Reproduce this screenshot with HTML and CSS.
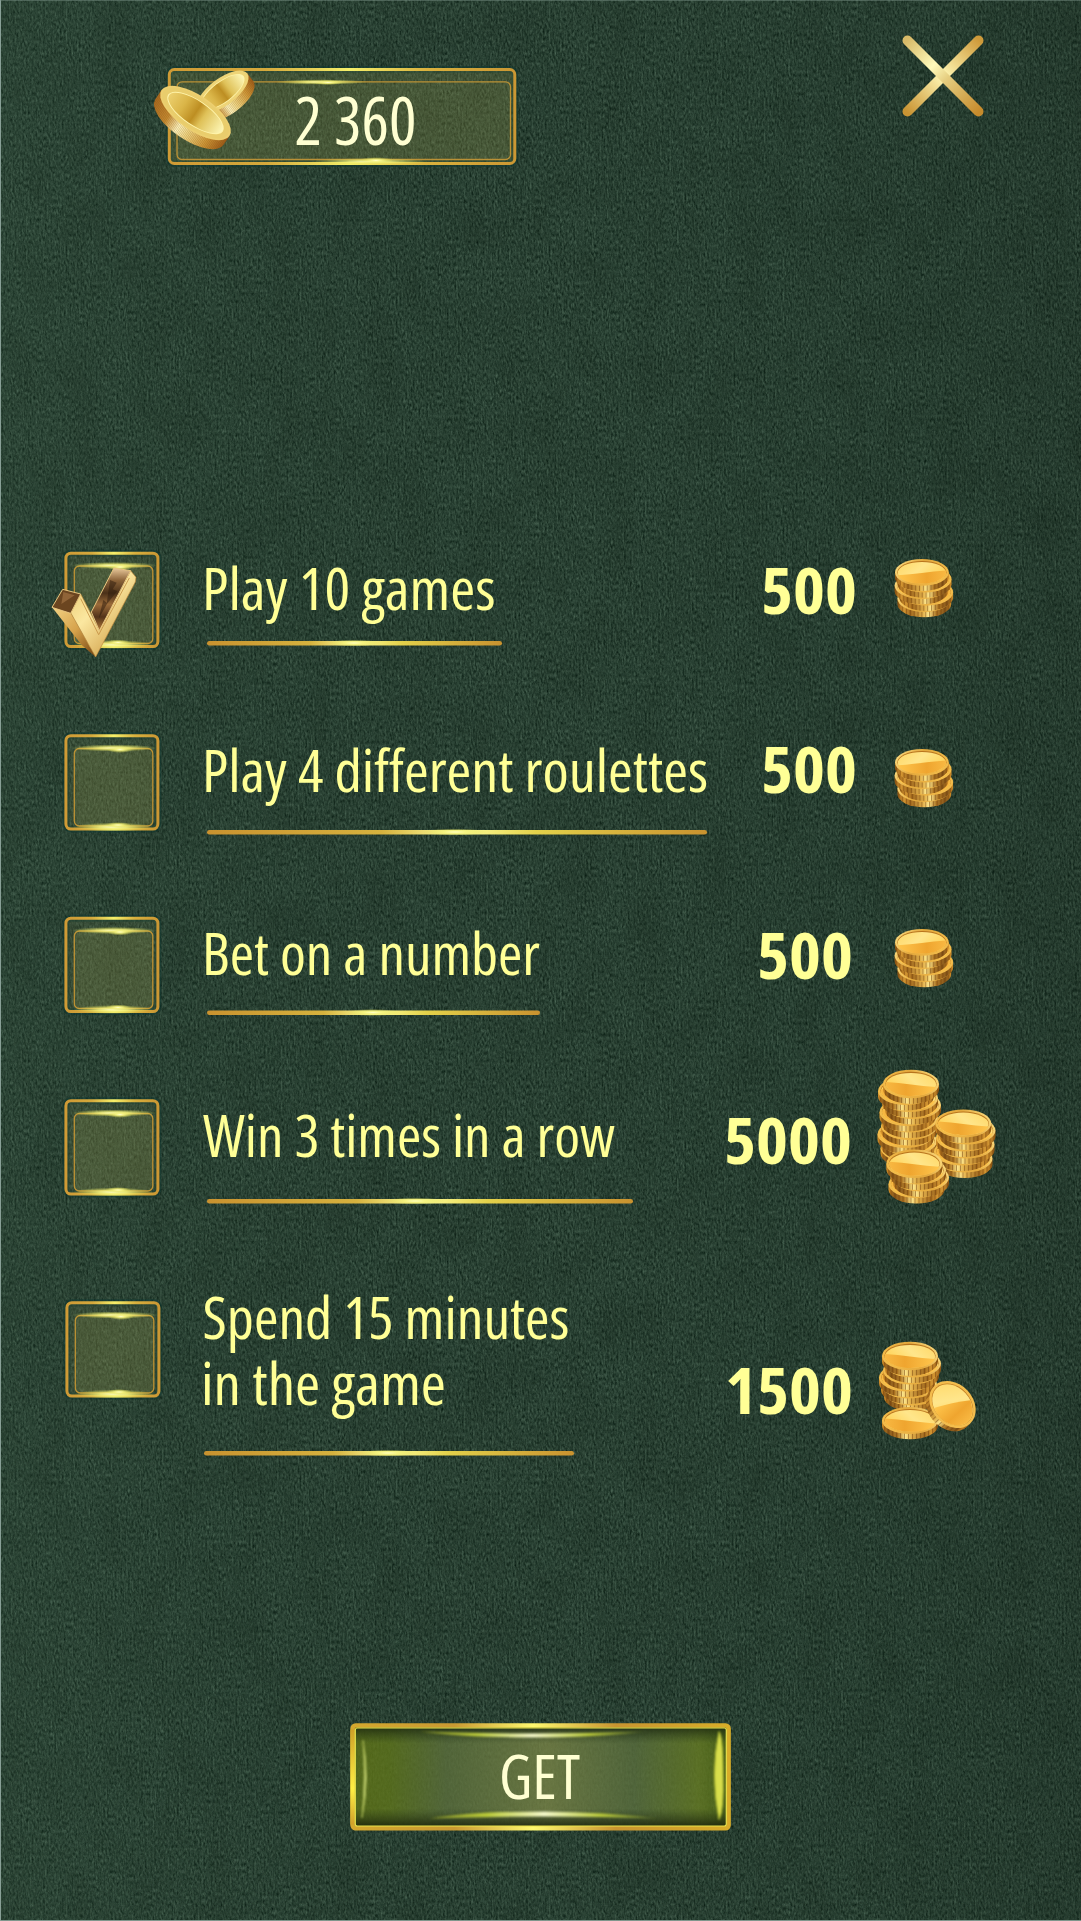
FILE: index.html
```html
<!DOCTYPE html>
<html lang="en">
<head>
<meta charset="utf-8">
<title>Daily tasks</title>
<link rel="stylesheet" href="styles.css">
</head>
<body>
<svg class="felt" width="1081" height="1921" aria-hidden="true">
  <defs>
    <filter id="grain" x="0" y="0" width="100%" height="100%" color-interpolation-filters="sRGB">
      <feTurbulence type="fractalNoise" baseFrequency="0.53 0.27" numOctaves="3" seed="23" result="fine"/>
      <feColorMatrix in="fine" values="0.2 0.17 0 0 -0.022  0.22 0.19 0 0 0.05  0.2 0.17 0 0 0.016  0 0 0 0 1" result="weave"/>
      <feTurbulence type="fractalNoise" baseFrequency="0.03 0.02" numOctaves="4" seed="4"/>
      <feColorMatrix values="0 0 0 0 0.05  0 0 0 0 0.1  0 0 0 0 0.06  0.3 0 0 0 -0.11" result="mottle"/>
      <feMerge><feMergeNode in="weave"/><feMergeNode in="mottle"/></feMerge>
    </filter>
    <linearGradient id="shade"><stop offset="0" stop-color="#45694f" stop-opacity=".1"/><stop offset=".5" stop-color="#1c3226" stop-opacity="0"/><stop offset="1" stop-color="#0b150e" stop-opacity=".12"/></linearGradient>
    <linearGradient id="gold"><stop offset="0" stop-color="#cf9a35"/><stop offset=".28" stop-color="#d5a93c"/><stop offset=".52" stop-color="#f6f06a"/><stop offset=".75" stop-color="#d9b03d"/><stop offset="1" stop-color="#cb9733"/></linearGradient>
    <linearGradient id="rule" gradientUnits="objectBoundingBox"><stop offset="0" stop-color="#c9922f"/><stop offset=".35" stop-color="#d6b23e"/><stop offset=".5" stop-color="#ffff9b"/><stop offset=".66" stop-color="#e3d14a"/><stop offset="1" stop-color="#c9922f"/></linearGradient>
    <radialGradient id="glint"><stop offset="0" stop-color="#ffffc4"/><stop offset=".35" stop-color="#f5f47f" stop-opacity=".85"/><stop offset="1" stop-color="#d9d950" stop-opacity="0"/></radialGradient>
    <linearGradient id="side"><stop offset="0" stop-color="#8d5410"/><stop offset=".12" stop-color="#cf8f2c"/><stop offset=".25" stop-color="#9c6319"/><stop offset=".48" stop-color="#e2b04a"/><stop offset=".58" stop-color="#fbe389"/><stop offset=".72" stop-color="#a9701f"/><stop offset=".9" stop-color="#7d4d14"/><stop offset="1" stop-color="#cf8720"/></linearGradient>
    <linearGradient id="rim" x1="0" y1="0" x2="1" y2=".3"><stop offset="0" stop-color="#ffe38a"/><stop offset=".5" stop-color="#e3a83c"/><stop offset="1" stop-color="#f2bb4a"/></linearGradient>
    <linearGradient id="face" x1="0" y1="0" x2="1" y2=".5"><stop offset="0" stop-color="#ffd766"/><stop offset=".5" stop-color="#ffe68b"/><stop offset="1" stop-color="#ffd256"/></linearGradient>
    <linearGradient id="faceLow"><stop offset="0" stop-color="#ffc64d"/><stop offset=".6" stop-color="#efa52f"/><stop offset="1" stop-color="#f8b842"/></linearGradient>
    <pattern id="reeds" width="4" height="10" patternUnits="userSpaceOnUse"><path d="M1 0h1v10H1z" fill="#754411" opacity=".5"/><path d="M2.800 0h.6v10h-.6z" fill="#ffe48f" opacity=".2"/></pattern>
    <symbol id="coin" viewBox="-29 -16 58 38" overflow="visible">
      <path d="M-28 0V5.5A28 14 0 0 0 28 5.5V0Z" fill="url(#side)"/>
      <path d="M-28 0V5.5A28 14 0 0 0 28 5.5V0Z" fill="url(#reeds)"/>
      <ellipse rx="28" ry="14" fill="url(#rim)"/>
      <ellipse cy="-.2" rx="25.6" ry="11.7" fill="#b8741d"/>
      <ellipse cy=".4" rx="25.2" ry="11.3" fill="url(#face)"/>
      <path d="M-25 3C-8 2 8-1 25-2C27 5 15 11.7 0 11.7C-14 11.7-23 8-25 3Z" fill="url(#faceLow)"/>
    </symbol>
    <linearGradient id="brass"><stop offset="0" stop-color="#ecd06e"/><stop offset=".28" stop-color="#dab548"/><stop offset=".5" stop-color="#bd8e22"/><stop offset=".64" stop-color="#dfc158"/><stop offset="1" stop-color="#fdf6b5"/></linearGradient>
    <linearGradient id="brassSide"><stop offset="0" stop-color="#a9691f"/><stop offset=".25" stop-color="#c58a30"/><stop offset=".42" stop-color="#fff6c0"/><stop offset=".55" stop-color="#f1d987"/><stop offset=".8" stop-color="#cf9737"/><stop offset="1" stop-color="#9d5b17"/></linearGradient>
    <pattern id="finereeds" width="1.6" height="10" patternUnits="userSpaceOnUse"><path d="M0 0h.5v30H0z" fill="#7a4b12" opacity=".4"/></pattern>
    <g id="c"><use href="#coin" x="-29" y="-16" width="58" height="38"/></g>
    <g id="stack">
      <use href="#c" transform="translate(924.3 598.6) scale(.96)"/>
      <use href="#c" transform="translate(926.2 592.2) scale(.96)"/>
      <use href="#c" transform="translate(921.5 585.6) scale(.96)"/>
      <use href="#c" transform="translate(924.6 579.1) scale(.96)"/>
      <use href="#c" transform="translate(921.9 572.4) scale(.96)"/>
    </g>
    <g id="frame">
      <rect x="65.900" y="553.2" width="92" height="93.400" rx="5" fill="none" stroke="#0b3630" stroke-opacity=".5" stroke-width="7"/>
      <rect x="65.900" y="553.2" width="92" height="93.400" rx="5" fill="#8f9050" fill-opacity=".14" stroke="url(#gold)" stroke-width="3"/>
      <rect x="74.300" y="566" width="78.500" height="77.500" rx="5" fill="#97974a" fill-opacity=".2" stroke="#bd9234" stroke-width="1.300"/>
      <ellipse cx="114" cy="565.5" rx="43" ry="3.600" fill="url(#glint)"/>
      <ellipse cx="120" cy="567" rx="13" ry="3.500" fill="url(#glint)"/>
      <ellipse cx="113" cy="644.5" rx="40" ry="4.500" fill="url(#glint)"/>
      <ellipse cx="118" cy="642.5" rx="13" ry="3" fill="url(#glint)"/>
    </g>
  </defs>
  <rect width="1081" height="1921" filter="url(#grain)"/>
  <rect width="1081" height="1921" fill="url(#shade)"/>
  <path d="M.5 0V1921M0 1920.600H1081" stroke="#89a097"/><path d="M0 .3H1081" stroke="#789085" stroke-width=".6"/>
</svg>

<main class="screen">
  <header class="top">
    <svg class="balance" width="380" height="110" viewBox="146 62 380 110" role="img" aria-label="Balance">
      <rect x="169.300" y="69.500" width="345.500" height="94" rx="5" fill="none" stroke="#0b3630" stroke-opacity=".5" stroke-width="7"/>
      <rect x="169.300" y="69.500" width="345.500" height="94" rx="5" fill="#97974a" fill-opacity=".22" stroke="url(#gold)" stroke-width="3"/>
      <rect x="177" y="81.800" width="333.500" height="77.700" rx="5" fill="#97974a" fill-opacity=".08" stroke="#ba9136" stroke-width="1.300"/>
      <ellipse cx="321" cy="82" rx="46" ry="2.700" fill="url(#glint)"/><ellipse cx="328" cy="82.500" rx="15" ry="2.500" fill="url(#glint)"/>
      <ellipse cx="370" cy="161.500" rx="58" ry="3.500" fill="url(#glint)"/><ellipse cx="376" cy="160.500" rx="17" ry="3.500" fill="url(#glint)"/>
      <g transform="translate(222.500 92) rotate(-37)">
        <path d="M-31 0V10A31 13.500 0 0 0 31 10V0Z" fill="url(#brassSide)"/><path d="M-31 0V10A31 13.500 0 0 0 31 10V0Z" fill="url(#finereeds)"/>
        <ellipse rx="31" ry="13.500" fill="#eed477"/><ellipse rx="26.500" ry="10.500" fill="#fff4a8"/><ellipse rx="25.500" ry="9.800" fill="url(#brass)"/>
      </g>
      <g transform="translate(195.500 113) rotate(34)">
        <path d="M-41 0V11A41 17.500 0 0 0 41 11V0Z" fill="url(#brassSide)"/><path d="M-41 0V11A41 17.500 0 0 0 41 11V0Z" fill="url(#finereeds)"/>
        <ellipse rx="41" ry="17.500" fill="#edcf70"/><ellipse rx="39" ry="16" fill="#e9cd6c"/><ellipse rx="33" ry="12.800" fill="#fff4aa"/><ellipse rx="31.800" ry="11.900" fill="url(#brass)"/>
      </g>
      <text class="value" x="294.500" y="144.500" textLength="122" lengthAdjust="spacingAndGlyphs">2 360</text>
    </svg>
    <svg class="close" width="84" height="84" viewBox="901 34 84 84" role="img" aria-label="Close">
      <defs><linearGradient id="xa" gradientUnits="userSpaceOnUse" x1="907" y1="112" x2="979" y2="40"><stop offset="0" stop-color="#c99433"/><stop offset=".5" stop-color="#fff7b4"/><stop offset="1" stop-color="#ce9a3a"/></linearGradient>
      <linearGradient id="xb" gradientUnits="userSpaceOnUse" x1="907" y1="40" x2="979" y2="112"><stop offset="0" stop-color="#d8ba68"/><stop offset=".36" stop-color="#fffbbb"/><stop offset=".55" stop-color="#e5cc7e"/><stop offset="1" stop-color="#c68b2c"/></linearGradient></defs>
      <path d="M907.5 111.5L978.5 40.5" stroke="url(#xa)" stroke-width="10" stroke-linecap="round"/><path d="M907.5 40.5L978.5 111.5" stroke="url(#xb)" stroke-width="10" stroke-linecap="round"/>
    </svg>
  </header>

  <section class="tasks">
    <div class="task">
      <svg width="150" height="182" viewBox="50 512 150 182"><use href="#frame"/>
        <g transform="translate(40 530) scale(.33333)" stroke-linejoin="round">
          <defs><linearGradient id="ck" x1="0" y1="0" x2=".8" y2="1"><stop offset="0" stop-color="#e8c468"/><stop offset=".45" stop-color="#fbe7a0"/><stop offset="1" stop-color="#cb963c"/></linearGradient>
          <linearGradient id="ckd" x1="0" y1="0" x2="0" y2="1"><stop offset="0" stop-color="#e9c99b"/><stop offset=".2" stop-color="#8b6339"/><stop offset=".4" stop-color="#4a3018"/><stop offset=".58" stop-color="#9b6b3a"/><stop offset=".78" stop-color="#53331a"/><stop offset="1" stop-color="#b67d3b"/></linearGradient>
          <linearGradient id="cks" x1="0" y1="0" x2="1" y2="1"><stop offset="0" stop-color="#f3d384"/><stop offset=".5" stop-color="#d6a24b"/><stop offset="1" stop-color="#70400f"/></linearGradient></defs>
          <path d="M36 232L92 248L167 381L125 345Z" fill="url(#cks)"/>
          <path d="M92 248L122 192L178 300L272 122L288 142L286 156L167 381Z" fill="url(#ck)" stroke="#c08a3c" stroke-width="2"/>
          <path d="M222 114L272 122L178 302L154 246Z" fill="url(#ckd)" stroke="#e8c680" stroke-width="3"/>
          <path d="M68 178L122 192L92 250L36 232Z" fill="#6b4520" stroke="#e8c680" stroke-width="3"/>
          <path d="M70 186L104 196L64 222Z" fill="#a8794a" opacity=".6"/>
          <path d="M122 206L176 314L268 144" fill="none" stroke="#c48f42" stroke-width="2.500"/>
          <path d="M210 150l20 8-12 20 14 5-32 40 4-30zM190 210l12 10-26 46z" fill="#2b190b" opacity=".5"/>
        </g>
      </svg>
      <svg width="520" height="182" viewBox="200 512 520 182"><text class="label" x="202" y="610" textLength="293.500" lengthAdjust="spacingAndGlyphs">Play 10 games</text><rect x="207" y="641" width="295" height="4.6" rx="2.3" fill="url(#rule)"/><ellipse cx="354" cy="643" rx="26" ry="3.6" fill="url(#glint)"/></svg>
      <svg width="150" height="182" viewBox="720 512 150 182"><text class="amount" x="761" y="614" textLength="96" lengthAdjust="spacingAndGlyphs">500</text></svg>
      <svg width="140" height="182" viewBox="870 512 140 182"><use href="#stack"/></svg>
    </div>

    <div class="task">
      <svg width="150" height="183" viewBox="50 694 150 183"><use href="#frame" y="182.5"/></svg>
      <svg width="520" height="183" viewBox="200 694 520 183"><text class="label" x="202" y="792" textLength="506" lengthAdjust="spacingAndGlyphs">Play 4 different roulettes</text><rect x="207" y="830" width="500" height="4.6" rx="2.3" fill="url(#rule)"/><ellipse cx="455" cy="832" rx="32" ry="3.6" fill="url(#glint)"/></svg>
      <svg width="150" height="183" viewBox="720 694 150 183"><text class="amount" x="761" y="793" textLength="96" lengthAdjust="spacingAndGlyphs">500</text></svg>
      <svg width="140" height="183" viewBox="870 694 140 183"><use href="#stack" y="190"/></svg>
    </div>

    <div class="task">
      <svg width="150" height="183" viewBox="50 877 150 183"><use href="#frame" y="365"/></svg>
      <svg width="520" height="183" viewBox="200 877 520 183"><text class="label" x="202" y="974.5" textLength="338" lengthAdjust="spacingAndGlyphs">Bet on a number</text><rect x="207" y="1010.5" width="333" height="4.6" rx="2.3" fill="url(#rule)"/><ellipse cx="373" cy="1012.5" rx="27" ry="3.6" fill="url(#glint)"/></svg>
      <svg width="150" height="183" viewBox="720 877 150 183"><text class="amount" x="757" y="979" textLength="96" lengthAdjust="spacingAndGlyphs">500</text></svg>
      <svg width="140" height="183" viewBox="870 877 140 183"><use href="#stack" y="370"/></svg>
    </div>

    <div class="task">
      <svg width="150" height="201" viewBox="50 1060 150 201"><use href="#frame" y="547.5"/></svg>
      <svg width="520" height="201" viewBox="200 1060 520 201"><text class="label" x="203" y="1157" textLength="412" lengthAdjust="spacingAndGlyphs">Win 3 times in a row</text><rect x="207" y="1199" width="426" height="4.6" rx="2.3" fill="url(#rule)"/><ellipse cx="415" cy="1201" rx="30" ry="3.6" fill="url(#glint)"/></svg>
      <svg width="150" height="201" viewBox="720 1060 150 201"><text class="amount" x="724" y="1164" textLength="128" lengthAdjust="spacingAndGlyphs">5000</text></svg>
      <svg width="140" height="201" viewBox="870 1060 140 201">
        <g>
          <use href="#c" transform="translate(908.5 1148) scale(-1 1)"/><use href="#c" transform="translate(909 1141) scale(-1 1)"/><use href="#c" transform="translate(905.5 1134) scale(-1 1)"/><use href="#c" transform="translate(909 1126) scale(-1 1)"/><use href="#c" transform="translate(910 1118.5) scale(-1 1)"/><use href="#c" transform="translate(907.5 1112) scale(-1 1)"/><use href="#c" transform="translate(913 1105) scale(-1 1)"/><use href="#c" transform="translate(910 1098) scale(-1 1)"/><use href="#c" transform="translate(906 1091) scale(-1 1)"/><use href="#c" transform="translate(911 1084) scale(-1 1.02)"/>
          <use href="#c" transform="translate(964.5 1158.5) scale(-1 1)"/><use href="#c" transform="translate(962 1151.5) scale(-1 1)"/><use href="#c" transform="translate(966.5 1144.5) scale(-1 1)"/><use href="#c" transform="translate(964 1137.5) scale(-1 1)"/><use href="#c" transform="translate(967.5 1130.5) scale(-1 1)"/><use href="#c" transform="translate(963.3 1123.5) scale(-1 1)"/>
          <use href="#c" transform="translate(916.5 1184) scale(-1 1)"/><use href="#c" transform="translate(921 1177.5) scale(-1 1)"/><use href="#c" transform="translate(918 1170.5) scale(-1 1)"/><use href="#c" transform="translate(914.3 1163.7) scale(-1 1.02)"/>
        </g>
      </svg>
    </div>

    <div class="task">
      <svg width="150" height="210" viewBox="50 1261 150 210"><use href="#frame" x="1" y="749.5"/></svg>
      <svg width="520" height="210" viewBox="200 1261 520 210"><text class="label"><tspan x="202.500" y="1339" textLength="367" lengthAdjust="spacingAndGlyphs">Spend 15 minutes</tspan><tspan x="201" y="1405" textLength="245" lengthAdjust="spacingAndGlyphs">in the game</tspan></text><rect x="204" y="1451" width="370" height="4.6" rx="2.3" fill="url(#rule)"/><ellipse cx="388" cy="1453" rx="28" ry="3.6" fill="url(#glint)"/></svg>
      <svg width="150" height="210" viewBox="720 1261 150 210"><text class="amount" x="725" y="1414" textLength="128" lengthAdjust="spacingAndGlyphs">1500</text></svg>
      <svg width="140" height="210" viewBox="870 1261 140 210">
        <use href="#c" transform="translate(912 1391.500) scale(-1 1)"/><use href="#c" transform="translate(909 1384.5) scale(-1 1)"/><use href="#c" transform="translate(907 1377.5) scale(-1 1)"/><use href="#c" transform="translate(911 1370.5) scale(-1 1)"/><use href="#c" transform="translate(913 1363.500) scale(-1 1)"/><use href="#c" transform="translate(910 1356) scale(-1 1.02)"/>
        <use href="#c" transform="translate(910 1420.500) scale(-1 .96)"/>
        <g transform="translate(952.500 1404.500) rotate(47)"><path d="M-26 0V5A26 20 0 0 0 26 5V0Z" fill="url(#side)"/><path d="M-26 0V5A26 20 0 0 0 26 5V0Z" fill="url(#reeds)"/><ellipse rx="26" ry="20.500" fill="#f4bd4d"/><ellipse rx="23.500" ry="18" fill="#c17d22"/><ellipse cx=".3" cy=".3" rx="23" ry="17.500" fill="url(#face)"/><path d="M-10 16Q-2 -1 9-16Q24-9 23 2C20 14 8 18 0 18Q-6 18-10 16Z" fill="url(#faceLow)"/></g>
      </svg>
    </div>
  </section>

  <button class="get" type="button">
    <svg width="381" height="108" viewBox="350 1722.5 381 108">
      <defs>
        <linearGradient id="btn"><stop offset="0" stop-color="#5f7316"/><stop offset=".1" stop-color="#5f751b"/><stop offset=".25" stop-color="#5c6f3c"/><stop offset=".52" stop-color="#788346"/><stop offset=".75" stop-color="#5a6e3d"/><stop offset=".92" stop-color="#677c23"/><stop offset="1" stop-color="#4d6511"/></linearGradient>
        <linearGradient id="edge" x1="0" y1="0" x2="0" y2="1"><stop offset="0" stop-color="#15200c" stop-opacity=".8"/><stop offset=".17" stop-color="#233417" stop-opacity="0"/><stop offset=".82" stop-color="#233417" stop-opacity="0"/><stop offset="1" stop-color="#171d08" stop-opacity=".8"/></linearGradient>
        <linearGradient id="hborder"><stop offset="0" stop-color="#d4a82e"/><stop offset=".27" stop-color="#ca9932"/><stop offset=".48" stop-color="#fff86f"/><stop offset=".7" stop-color="#c99430"/><stop offset="1" stop-color="#d8ad29"/></linearGradient>
        <linearGradient id="streak"><stop offset="0" stop-color="#c3cd2d" stop-opacity=".5"/><stop offset=".25" stop-color="#b9c939"/><stop offset=".5" stop-color="#f6f9cb"/><stop offset=".75" stop-color="#b9c939"/><stop offset="1" stop-color="#b9c939" stop-opacity=".2"/></linearGradient>
        <linearGradient id="leftb" gradientUnits="userSpaceOnUse" x1="0" y1="1728" x2="0" y2="1825"><stop offset="0" stop-color="#cea027"/><stop offset=".62" stop-color="#ffef43"/><stop offset="1" stop-color="#cf9e29"/></linearGradient>
        <filter id="soft"><feGaussianBlur stdDeviation=".8"/></filter>
      </defs>
      <rect x="352.300" y="1725" width="376.500" height="103" rx="3" fill="url(#btn)" fill-opacity=".8"/>
      <rect x="355" y="1726" width="372" height="100" fill="url(#edge)"/>
      <rect x="352.600" y="1725" width="376" height="102.800" rx="3" fill="none" stroke="url(#hborder)" stroke-width="4.500"/>
      <path d="M352.600 1729V1824" stroke="url(#leftb)" stroke-width="4.500"/>
      <rect x="355.300" y="1727.500" width="371" height="98" rx="2" fill="none" stroke="#e7e34c" stroke-width="1.200"/>
      <g filter="url(#soft)">
        <path d="M420 1731Q532 1735 645 1731Q595 1737 532 1737Q465 1737 420 1731Z" fill="url(#streak)"/>
        <path d="M430 1818Q540 1814 658 1818Q605 1811.500 545 1811Q470 1811 430 1818Z" fill="url(#streak)"/>
        <path d="M363 1740Q370 1777 362 1817Q366 1777 363 1740Z" fill="#ccda80" stroke="#adbd57"/>
        <path d="M719 1731Q710 1774 719 1819Q724 1810 723 1774Q723 1737 719 1731Z" fill="#d9df4c" stroke="#b4be31"/>
      </g>
      <text class="value get-text" x="499" y="1798" textLength="81" lengthAdjust="spacingAndGlyphs">GET</text>
    </svg>
  </button>
</main>
</body>
</html>
```
FILE: styles.css
```css
* { box-sizing: border-box; }

body {
  margin: 0;
  width: 1081px;
  height: 1921px;
  position: relative;
  overflow: hidden;
  background: #2b4035;
  font-family: "Open Sans", "Noto Sans", sans-serif;
}

svg { display: block; flex: none; overflow: visible; }

.felt { position: absolute; inset: 0; overflow: hidden; }

.screen {
  position: relative;
  height: 1921px;
  display: flex;
  flex-direction: column;
}

.top {
  height: 512px;
  padding: 34px 96px 0 146px;
  display: flex;
  justify-content: space-between;
  align-items: flex-start;
}

.balance { margin-top: 28px; }

.tasks { padding-left: 50px; }

.task { display: flex; align-items: flex-start; }

.label,
.amount,
.value { font-stretch: 75%; }

.label { font-size: 58px; fill: #ffff96; }

.amount { font-size: 65px; font-weight: 700; fill: #ffff96; }

.value { font-size: 67px; fill: #ffffd2; }

.get-text { font-size: 62px; }

.get {
  align-self: flex-start;
  margin: 251.5px 0 0 350px;
  padding: 0;
  border: 0;
  background: none;
  font-family: inherit;
}
```
